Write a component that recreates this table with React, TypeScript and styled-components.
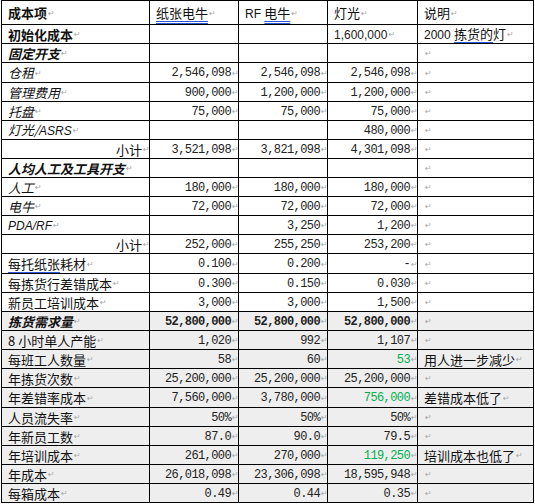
import React from "react";
import styled, { createGlobalStyle } from "styled-components";

const GlobalStyle = createGlobalStyle`
  html, body {
    margin: 0;
    padding: 0;
    background: #fff;
  }
  body {
    font-family: "Noto Sans CJK SC", "Liberation Sans", sans-serif;
    color: #111;
  }
`;

type LabelKind = "head" | "bold" | "boldItalic" | "italic" | "plain" | "sub";

interface Value {
  text: string;
  green?: boolean;
}

interface RowData {
  label: React.ReactNode;
  kind: LabelKind;
  values: (Value | null)[];
  note?: React.ReactNode;
  shade?: boolean;
  boldNums?: boolean;
  height?: number;
}

const Sheet = styled.div<{ $rows: string }>`
  display: grid;
  grid-template-columns: 148px 89px 89px 90px 116px;
  grid-template-rows: ${(p) => p.$rows};
  width: max-content;
  margin-left: 1px;
  border-top: 1px solid #000;
  border-left: 1px solid #000;
`;

const Cell = styled.div<{ $shade?: boolean; $right?: boolean }>`
  display: flex;
  align-items: center;
  justify-content: ${(p) => (p.$right ? "flex-end" : "flex-start")};
  box-sizing: border-box;
  padding: ${(p) => (p.$right ? "1px 0 0 0" : "1px 0 0 6px")};
  border-right: 1px solid #000;
  border-bottom: 1px solid #000;
  background: ${(p) => (p.$shade ? "#eeeeee" : "#fff")};
  overflow: hidden;
  white-space: nowrap;
`;

const Label = styled.span<{ $bold?: boolean; $italic?: boolean }>`
  font-family: "Noto Sans CJK SC", "Liberation Sans", sans-serif;
  font-size: 13px;
  line-height: 16px;
  font-weight: ${(p) => (p.$bold ? 700 : 400)};
  font-style: ${(p) => (p.$italic ? "italic" : "normal")};
  color: #111;
`;

const Latin = styled.span`
  font-family: "Liberation Sans", sans-serif;
  font-size: 12px;
`;

const Num = styled.span<{ $green?: boolean; $bold?: boolean }>`
  font-family: "Liberation Mono", monospace;
  font-size: 12px;
  letter-spacing: -0.6px;
  line-height: 16px;
  font-weight: ${(p) => (p.$bold ? 700 : 400)};
  color: ${(p) => (p.$green ? "#00b050" : "#222")};
`;

const SansNum = styled.span`
  font-family: "Liberation Sans", sans-serif;
  font-size: 12px;
  color: #222;
`;

const Mark = styled.span<{ $clip?: boolean }>`
  display: inline-block;
  width: ${(p) => (p.$clip ? "6px" : "auto")};
  overflow: hidden;
  margin-left: 1px;
  font-family: "DejaVu Sans", sans-serif;
  font-size: 8px;
  color: #a6a6a6;
`;

const Spell = styled.span`
  text-decoration: underline double #2f58d6;
  text-underline-offset: 3px;
  text-decoration-thickness: 1px;
`;

const rows: RowData[] = [
  {
    label: "成本项",
    kind: "head",
    values: [null, null, null],
    height: 24,
  },
  {
    label: "初始化成本",
    kind: "bold",
    values: [null, null, { text: "1,600,000" }],
    note: (
      <>
        <Latin>2000 </Latin>
        <Spell>拣货的</Spell>灯
      </>
    ),
  },
  { label: "固定开支", kind: "boldItalic", values: [null, null, null], note: "" },
  {
    label: "仓租",
    kind: "italic",
    values: [{ text: "2,546,098" }, { text: "2,546,098" }, { text: "2,546,098" }],
    note: "",
    height: 20,
  },
  {
    label: "管理费用",
    kind: "italic",
    values: [{ text: "900,000" }, { text: "1,200,000" }, { text: "1,200,000" }],
    note: "",
  },
  {
    label: "托盘",
    kind: "italic",
    values: [{ text: "75,000" }, { text: "75,000" }, { text: "75,000" }],
    note: "",
  },
  {
    label: (
      <>
        灯光/<Latin>ASRS</Latin>
      </>
    ),
    kind: "italic",
    values: [null, null, { text: "480,000" }],
    note: "",
  },
  {
    label: "小计",
    kind: "sub",
    values: [{ text: "3,521,098" }, { text: "3,821,098" }, { text: "4,301,098" }],
    note: "",
  },
  { label: "人均人工及工具开支", kind: "boldItalic", values: [null, null, null], note: "" },
  {
    label: "人工",
    kind: "italic",
    values: [{ text: "180,000" }, { text: "180,000" }, { text: "180,000" }],
    note: "",
  },
  {
    label: <Spell>电牛</Spell>,
    kind: "italic",
    values: [{ text: "72,000" }, { text: "72,000" }, { text: "72,000" }],
    note: "",
  },
  {
    label: <Latin>PDA/RF</Latin>,
    kind: "italic",
    values: [null, { text: "3,250" }, { text: "1,200" }],
    note: "",
  },
  {
    label: "小计",
    kind: "sub",
    values: [{ text: "252,000" }, { text: "255,250" }, { text: "253,200" }],
    note: "",
  },
  {
    label: (
      <>
        <Spell>每托纸张</Spell>耗材
      </>
    ),
    kind: "plain",
    values: [{ text: "0.100" }, { text: "0.200" }, { text: "-" }],
    note: "",
    height: 20,
  },
  {
    label: (
      <>
        <Spell>每拣货行</Spell>差错成本
      </>
    ),
    kind: "plain",
    values: [{ text: "0.300" }, { text: "0.150" }, { text: "0.030" }],
    note: "",
  },
  {
    label: "新员工培训成本",
    kind: "plain",
    values: [{ text: "3,000" }, { text: "3,000" }, { text: "1,500" }],
    note: "",
  },
  {
    label: <Spell>拣货需求量</Spell>,
    kind: "boldItalic",
    values: [{ text: "52,800,000" }, { text: "52,800,000" }, { text: "52,800,000" }],
    note: "",
    shade: true,
    boldNums: true,
  },
  {
    label: "8 小时单人产能",
    kind: "plain",
    values: [{ text: "1,020" }, { text: "992" }, { text: "1,107" }],
    note: "",
    shade: true,
  },
  {
    label: "每班工人数量",
    kind: "plain",
    values: [{ text: "58" }, { text: "60" }, { text: "53", green: true }],
    note: "用人进一步减少",
    shade: true,
  },
  {
    label: (
      <>
        <Spell>年拣货</Spell>次数
      </>
    ),
    kind: "plain",
    values: [{ text: "25,200,000" }, { text: "25,200,000" }, { text: "25,200,000" }],
    note: "",
    shade: true,
  },
  {
    label: "年差错率成本",
    kind: "plain",
    values: [{ text: "7,560,000" }, { text: "3,780,000" }, { text: "756,000", green: true }],
    note: "差错成本低了",
    shade: true,
    height: 20,
  },
  {
    label: "人员流失率",
    kind: "plain",
    values: [{ text: "50%" }, { text: "50%" }, { text: "50%" }],
    note: "",
    shade: true,
  },
  {
    label: "年新员工数",
    kind: "plain",
    values: [{ text: "87.0" }, { text: "90.0" }, { text: "79.5" }],
    note: "",
    shade: true,
  },
  {
    label: "年培训成本",
    kind: "plain",
    values: [{ text: "261,000" }, { text: "270,000" }, { text: "119,250", green: true }],
    note: "培训成本也低了",
    shade: true,
  },
  {
    label: "年成本",
    kind: "plain",
    values: [{ text: "26,018,098" }, { text: "23,306,098" }, { text: "18,595,948" }],
    note: "",
    shade: true,
  },
  {
    label: "每箱成本",
    kind: "plain",
    values: [{ text: "0.49" }, { text: "0.44" }, { text: "0.35" }],
    note: "",
    shade: true,
  },
];

const headers: React.ReactNode[] = [
  <Spell>纸张电牛</Spell>,
  <>
    <Latin>RF </Latin>
    <Spell>电牛</Spell>
  </>,
  "灯光",
  "说明",
];

function LabelCell({ row }: { row: RowData }) {
  const bold = row.kind === "head" || row.kind === "bold" || row.kind === "boldItalic";
  const italic = row.kind === "italic" || row.kind === "boldItalic";
  return (
    <Cell $shade={row.shade} $right={row.kind === "sub"}>
      <Label $bold={bold} $italic={italic}>
        {row.label}
      </Label>
      <Mark $clip={row.kind === "sub"}>↵</Mark>
    </Cell>
  );
}

export default function App() {
  const template = rows.map((r) => `${r.height ?? 19}px`).join(" ");
  return (
    <>
      <GlobalStyle />
      <Sheet $rows={template}>
        {rows.map((row, i) => (
          <React.Fragment key={i}>
            <LabelCell row={row} />
            {i === 0
              ? headers.map((h, j) => (
                  <Cell key={j}>
                    <Label>{h}</Label>
                    <Mark>↵</Mark>
                  </Cell>
                ))
              : row.values.map((v, j) =>
                  v === null ? (
                    <Cell key={j} $shade={row.shade} />
                  ) : i === 1 ? (
                    <Cell key={j} $shade={row.shade}>
                      <SansNum>{v.text}</SansNum>
                      <Mark>↵</Mark>
                    </Cell>
                  ) : (
                    <Cell key={j} $shade={row.shade} $right>
                      <Num $green={v.green} $bold={row.boldNums}>
                        {v.text}
                      </Num>
                      <Mark $clip>↵</Mark>
                    </Cell>
                  )
                )}
            {i > 0 && (
              <Cell $shade={row.shade}>
                {row.note !== undefined && (
                  <>
                    <Label>{row.note}</Label>
                    <Mark>↵</Mark>
                  </>
                )}
              </Cell>
            )}
          </React.Fragment>
        ))}
      </Sheet>
    </>
  );
}
